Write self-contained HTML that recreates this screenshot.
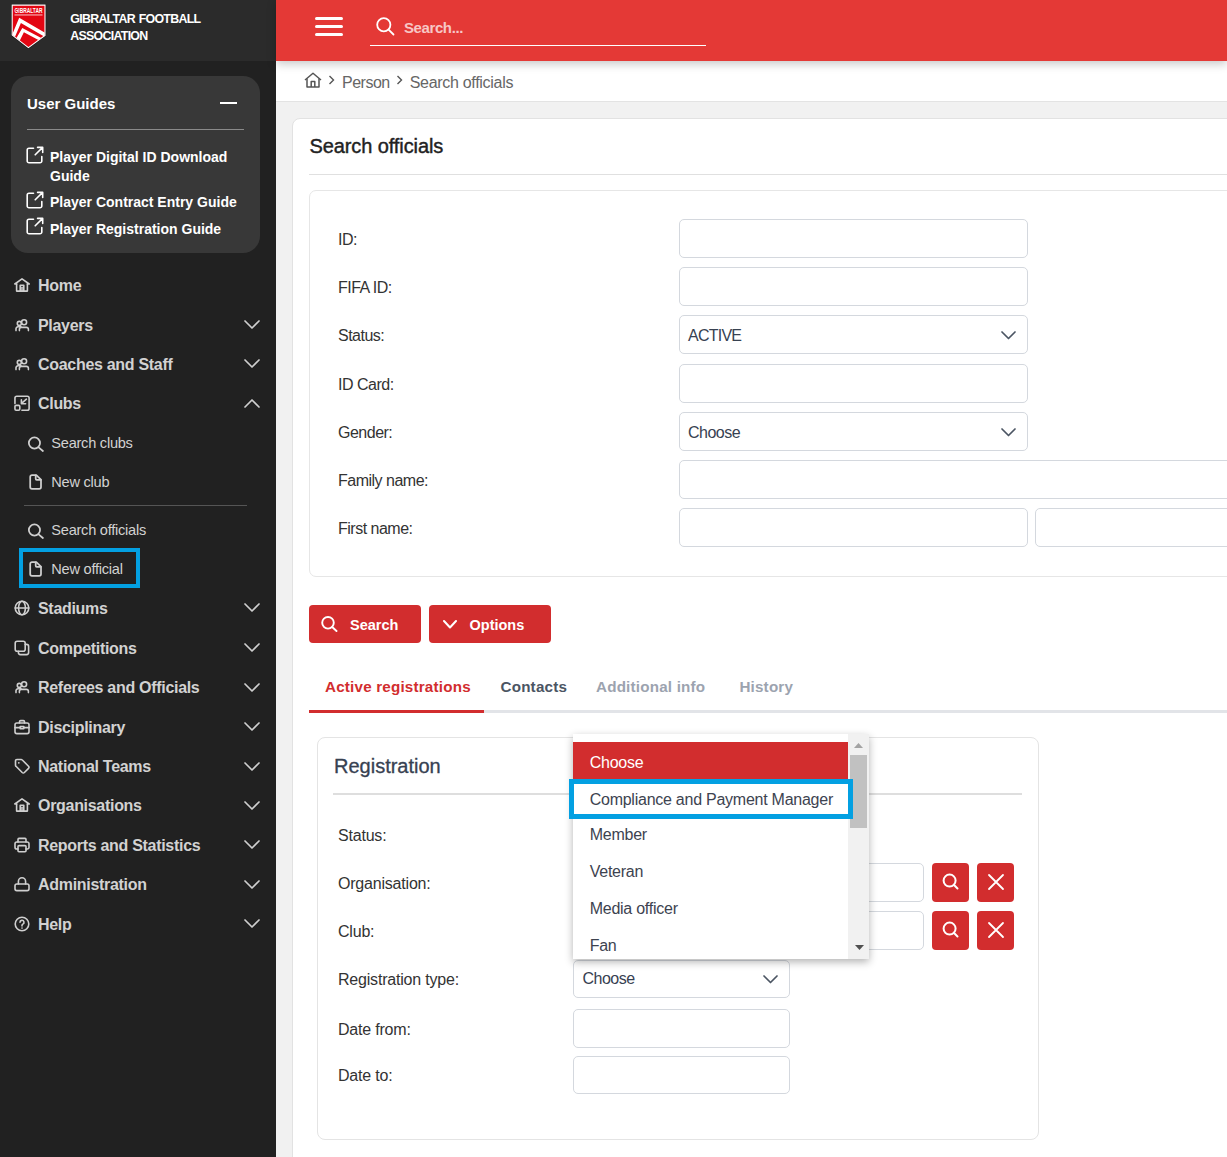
<!DOCTYPE html>
<html><head><meta charset="utf-8">
<style>
*{box-sizing:border-box;margin:0;padding:0}
html,body{width:1227px;height:1157px;overflow:hidden;background:#f1f1f1;font-family:"Liberation Sans",sans-serif}
.abs{position:absolute}
svg{display:block}
#sb{position:absolute;left:0;top:0;width:276px;height:1157px;background:#212121}
#sbtop{position:absolute;left:0;top:0;width:276px;height:61px;background:#2b2b2b}
.brand{position:absolute;left:70.3px;top:11.2px;color:#fff;font-weight:700;font-size:12.4px;line-height:17px;letter-spacing:-0.72px;word-spacing:1px}
#ug{position:absolute;left:11px;top:76px;width:249px;height:177px;background:#383838;border-radius:17px}
.ugt{position:absolute;left:16px;top:18px;color:#fff;font-weight:700;font-size:15px;line-height:20px}
.ugline{position:absolute;left:16px;top:53px;width:217px;height:1px;background:#8a8a8a}
.ugl{position:absolute;left:39px;color:#fff;font-weight:700;font-size:14px;line-height:19px}
.ugi{position:absolute;left:14.5px}
.nav{position:absolute;left:0;width:276px;height:24px;color:#d2d2d2;font-weight:700;font-size:16px;line-height:24px;letter-spacing:-0.3px}
.nav .t{position:absolute;left:38px;top:0;white-space:nowrap}
.nav svg.i{position:absolute;left:14px;top:4px}
.nav svg.c{position:absolute;left:244px;top:8px}
.sub{position:absolute;left:0;width:276px;height:24px;color:#d2d2d2;font-weight:400;font-size:14.6px;line-height:24px;letter-spacing:-0.25px}
.sub .t{position:absolute;left:51.3px;top:0;white-space:nowrap}
.sub svg.i{position:absolute;left:27px;top:4px}
#hdr{position:absolute;left:276px;top:0;width:951px;height:61px;background:#e43936;box-shadow:0 3px 9px rgba(0,0,0,0.22);z-index:2}
#bc{position:absolute;left:276px;top:61px;width:951px;height:41px;background:#fff;border-bottom:1px solid #e3e3e3}
.bct{position:absolute;top:11.5px;color:#666;font-size:16px;line-height:20px;letter-spacing:-0.5px}
#card{position:absolute;left:292px;top:118px;width:960px;height:1100px;background:#fff;border:1px solid #e2e2e2;border-radius:8px}
.lbl{position:absolute;color:#333;font-size:16px;line-height:20px;letter-spacing:-0.5px;white-space:nowrap}
.inp{position:absolute;background:#fff;border:1.5px solid #d4d8de;border-radius:5px}
.seltxt{position:absolute;left:8px;top:9px;color:#444;font-size:15px;line-height:20px}
.btn{position:absolute;background:#d22d2e;border-radius:4px;color:#fff;font-weight:700;font-size:14.5px}
.tab{position:absolute;top:677px;font-weight:700;font-size:15.2px;line-height:20px;letter-spacing:0.2px;white-space:nowrap}
.dd{position:absolute;left:573px;top:734px;width:296px;height:225px;background:#fff;box-shadow:0 3px 8px rgba(0,0,0,0.3);overflow:hidden;z-index:5}
.ddi{position:absolute;left:16.7px;color:#3d4350;font-size:16px;line-height:20px;letter-spacing:-0.25px;white-space:nowrap}
</style></head><body>
<!-- SIDEBAR -->
<div id="sb">
  <div id="sbtop">
    <svg class="abs" style="left:0;top:0" width="60" height="56" viewBox="0 0 60 56">
      <defs><clipPath id="shc"><path d="M12.5 5.5H44.7V35.3L28.4 47.2L12.5 35Z"/></clipPath></defs>
      <path d="M11.9 4.8H45.3V35.7L28.4 48.1L11.9 35.3Z" fill="none" stroke="#111" stroke-width="1.6" opacity="0.7"/>
      <path d="M12.2 5.1H45V35.5L28.4 47.6L12.2 35.1Z" fill="#e30613" stroke="#fff" stroke-width="1.1"/>
      <g clip-path="url(#shc)">
        <path d="M11 37.5L19.2 17.8L47 33.8L47 38.2L20.9 22.9L14.3 38.6Z" fill="#fff"/>
        <path d="M13.5 43L22.3 27.9L47 41L47 44.6L23.9 32.2L17.6 45Z" fill="#fff"/>
      </g>
      <path d="M14.6 7.2H42.6V12.8H14.6Z" fill="none"/>
      <text x="28.5" y="12.9" font-size="7.4" font-family="Liberation Sans" font-weight="700" fill="#fff" text-anchor="middle" textLength="28" lengthAdjust="spacingAndGlyphs">GIBRALTAR</text>
      <rect x="14.5" y="14.3" width="28" height="1.3" fill="#fff" opacity="0.6"/>
    </svg>
    <div class="brand">GIBRALTAR FOOTBALL<br>ASSOCIATION</div>
  </div>
  <div id="ug">
    <div class="ugt">User Guides</div>
    <div class="abs" style="left:209px;top:26px;width:17px;height:2px;background:#fff"></div>
    <div class="ugline"></div>
    <svg class="ugi" style="top:69.5px" width="18" height="18" viewBox="0 0 18 18" fill="none" stroke="#fff" stroke-width="1.6" stroke-linecap="round" stroke-linejoin="round"><path d="M7.5 2.2H3A1.8 1.8 0 0 0 1.2 4V15A1.8 1.8 0 0 0 3 16.8H14A1.8 1.8 0 0 0 15.8 15V10.5"/><path d="M9.2 8.8L16.4 1.6M11.6 1.4H16.7V6.5"/></svg>
    <div class="ugl" style="top:72px">Player Digital ID Download<br>Guide</div>
    <svg class="ugi" style="top:114.5px" width="18" height="18" viewBox="0 0 18 18" fill="none" stroke="#fff" stroke-width="1.6" stroke-linecap="round" stroke-linejoin="round"><path d="M7.5 2.2H3A1.8 1.8 0 0 0 1.2 4V15A1.8 1.8 0 0 0 3 16.8H14A1.8 1.8 0 0 0 15.8 15V10.5"/><path d="M9.2 8.8L16.4 1.6M11.6 1.4H16.7V6.5"/></svg>
    <div class="ugl" style="top:116.5px">Player Contract Entry Guide</div>
    <svg class="ugi" style="top:141.2px" width="18" height="18" viewBox="0 0 18 18" fill="none" stroke="#fff" stroke-width="1.6" stroke-linecap="round" stroke-linejoin="round"><path d="M7.5 2.2H3A1.8 1.8 0 0 0 1.2 4V15A1.8 1.8 0 0 0 3 16.8H14A1.8 1.8 0 0 0 15.8 15V10.5"/><path d="M9.2 8.8L16.4 1.6M11.6 1.4H16.7V6.5"/></svg>
    <div class="ugl" style="top:143.5px">Player Registration Guide</div>
  </div>
  <div class="nav" style="top:273.7px"><span class="t">Home</span></div>
<div class="abs" style="left:14px;top:276.7px"><svg width="16" height="16" viewBox="0 0 16 16" fill="none" stroke="#cfcfcf" stroke-width="1.6" stroke-linecap="round" stroke-linejoin="round"><path d="M2.6 7H0.8L8 1.9L15.2 7H13.4"/><path d="M2.6 7V14.1H13.4V7"/><path d="M6.2 14.1V8.3H9.8V14.1"/><path d="M8 10.2V14"/></svg></div>
<div class="nav" style="top:313.5px"><span class="t">Players</span></div>
<div class="abs" style="left:14px;top:316.5px"><svg width="16" height="16" viewBox="0 0 16 16" fill="none" stroke="#cfcfcf" stroke-width="1.6" stroke-linecap="round" stroke-linejoin="round"><circle cx="5.3" cy="6.4" r="2"/><circle cx="10.1" cy="5.3" r="2.5" fill="#212121"/><path d="M2 13.6V12A2 2 0 0 1 4 9.8H7"/><path d="M5.4 13.6V12.3A2 2 0 0 1 7.4 10.4H12.4A2 2 0 0 1 14.4 12.3V13.6" fill="#212121"/></svg></div>
<div class="abs" style="left:244px;top:320.0px"><svg width="16" height="9" viewBox="0 0 16 9" fill="none" stroke="#cfcfcf" stroke-width="1.7" stroke-linecap="round" stroke-linejoin="round"><path d="M1 1L8 8L15 1"/></svg></div>
<div class="nav" style="top:352.7px"><span class="t">Coaches and Staff</span></div>
<div class="abs" style="left:14px;top:355.7px"><svg width="16" height="16" viewBox="0 0 16 16" fill="none" stroke="#cfcfcf" stroke-width="1.6" stroke-linecap="round" stroke-linejoin="round"><circle cx="5.3" cy="6.4" r="2"/><circle cx="10.1" cy="5.3" r="2.5" fill="#212121"/><path d="M2 13.6V12A2 2 0 0 1 4 9.8H7"/><path d="M5.4 13.6V12.3A2 2 0 0 1 7.4 10.4H12.4A2 2 0 0 1 14.4 12.3V13.6" fill="#212121"/></svg></div>
<div class="abs" style="left:244px;top:359.2px"><svg width="16" height="9" viewBox="0 0 16 9" fill="none" stroke="#cfcfcf" stroke-width="1.7" stroke-linecap="round" stroke-linejoin="round"><path d="M1 1L8 8L15 1"/></svg></div>
<div class="nav" style="top:392.3px"><span class="t">Clubs</span></div>
<div class="abs" style="left:14px;top:395.3px"><svg width="16" height="16" viewBox="0 0 16 16" fill="none" stroke="#cfcfcf" stroke-width="1.6" stroke-linecap="round" stroke-linejoin="round"><path d="M0.95 8.6V3A1.8 1.8 0 0 1 2.75 1.2H13.3A1.8 1.8 0 0 1 15.1 3V13.4A1.8 1.8 0 0 1 13.3 15.2H7.9"/><rect x="0.95" y="10.4" width="4.85" height="4.8" rx="1.2"/><path d="M12.4 4.2L7.8 8.2"/><path d="M7.4 4.8V8.7H11.6"/></svg></div>
<div class="abs" style="left:244px;top:398.8px"><svg width="16" height="9" viewBox="0 0 16 9" fill="none" stroke="#cfcfcf" stroke-width="1.7" stroke-linecap="round" stroke-linejoin="round"><path d="M1 8L8 1L15 8"/></svg></div>
<div class="nav" style="top:596.9px"><span class="t">Stadiums</span></div>
<div class="abs" style="left:14px;top:599.9px"><svg width="16" height="16" viewBox="0 0 16 16" fill="none" stroke="#cfcfcf" stroke-width="1.6" stroke-linecap="round" stroke-linejoin="round"><circle cx="8" cy="8" r="6.8"/><path d="M1.2 8H14.8"/><path d="M8 1.2A3.4 6.8 0 0 0 8 14.8A3.4 6.8 0 0 0 8 1.2Z"/></svg></div>
<div class="abs" style="left:244px;top:603.4px"><svg width="16" height="9" viewBox="0 0 16 9" fill="none" stroke="#cfcfcf" stroke-width="1.7" stroke-linecap="round" stroke-linejoin="round"><path d="M1 1L8 8L15 1"/></svg></div>
<div class="nav" style="top:636.9px"><span class="t">Competitions</span></div>
<div class="abs" style="left:14px;top:639.9px"><svg width="16" height="16" viewBox="0 0 16 16" fill="none" stroke="#cfcfcf" stroke-width="1.6" stroke-linecap="round" stroke-linejoin="round"><rect x="1.2" y="1.2" width="10" height="10" rx="2"/><path d="M11.2 4.4H12.6A2 2 0 0 1 14.6 6.4V12.6A2 2 0 0 1 12.6 14.6H6.4A2 2 0 0 1 4.4 12.6V11.2"/></svg></div>
<div class="abs" style="left:244px;top:643.4px"><svg width="16" height="9" viewBox="0 0 16 9" fill="none" stroke="#cfcfcf" stroke-width="1.7" stroke-linecap="round" stroke-linejoin="round"><path d="M1 1L8 8L15 1"/></svg></div>
<div class="nav" style="top:676.3px"><span class="t">Referees and Officials</span></div>
<div class="abs" style="left:14px;top:679.3px"><svg width="16" height="16" viewBox="0 0 16 16" fill="none" stroke="#cfcfcf" stroke-width="1.6" stroke-linecap="round" stroke-linejoin="round"><circle cx="5.3" cy="6.4" r="2"/><circle cx="10.1" cy="5.3" r="2.5" fill="#212121"/><path d="M2 13.6V12A2 2 0 0 1 4 9.8H7"/><path d="M5.4 13.6V12.3A2 2 0 0 1 7.4 10.4H12.4A2 2 0 0 1 14.4 12.3V13.6" fill="#212121"/></svg></div>
<div class="abs" style="left:244px;top:682.8px"><svg width="16" height="9" viewBox="0 0 16 9" fill="none" stroke="#cfcfcf" stroke-width="1.7" stroke-linecap="round" stroke-linejoin="round"><path d="M1 1L8 8L15 1"/></svg></div>
<div class="nav" style="top:715.5px"><span class="t">Disciplinary</span></div>
<div class="abs" style="left:14px;top:718.5px"><svg width="16" height="16" viewBox="0 0 16 16" fill="none" stroke="#cfcfcf" stroke-width="1.6" stroke-linecap="round" stroke-linejoin="round"><path d="M5.5 4V2.8A1.2 1.2 0 0 1 6.7 1.6H9.3A1.2 1.2 0 0 1 10.5 2.8V4"/><rect x="1" y="4" width="14" height="10.6" rx="1.8"/><path d="M1 8.6H15"/><rect x="6.2" y="7.6" width="3.6" height="2.2" fill="#212121"/></svg></div>
<div class="abs" style="left:244px;top:722.0px"><svg width="16" height="9" viewBox="0 0 16 9" fill="none" stroke="#cfcfcf" stroke-width="1.7" stroke-linecap="round" stroke-linejoin="round"><path d="M1 1L8 8L15 1"/></svg></div>
<div class="nav" style="top:755.0px"><span class="t">National Teams</span></div>
<div class="abs" style="left:14px;top:758.0px"><svg width="16" height="16" viewBox="0 0 16 16" fill="none" stroke="#cfcfcf" stroke-width="1.6" stroke-linecap="round" stroke-linejoin="round"><circle cx="4.8" cy="4.8" r="0.9" fill="#cfcfcf" stroke="none"/><path d="M1.5 2.9V7.1A1.6 1.6 0 0 0 2 8.3L8.2 14.5A1.6 1.6 0 0 0 10.4 14.5L14.5 10.4A1.6 1.6 0 0 0 14.5 8.2L8.3 2A1.6 1.6 0 0 0 7.1 1.5H2.9A1.4 1.4 0 0 0 1.5 2.9Z"/></svg></div>
<div class="abs" style="left:244px;top:761.5px"><svg width="16" height="9" viewBox="0 0 16 9" fill="none" stroke="#cfcfcf" stroke-width="1.7" stroke-linecap="round" stroke-linejoin="round"><path d="M1 1L8 8L15 1"/></svg></div>
<div class="nav" style="top:794.2px"><span class="t">Organisations</span></div>
<div class="abs" style="left:14px;top:797.2px"><svg width="16" height="16" viewBox="0 0 16 16" fill="none" stroke="#cfcfcf" stroke-width="1.6" stroke-linecap="round" stroke-linejoin="round"><path d="M2.6 7H0.8L8 1.9L15.2 7H13.4"/><path d="M2.6 7V14.1H13.4V7"/><path d="M6.2 14.1V8.3H9.8V14.1"/><path d="M8 10.2V14"/></svg></div>
<div class="abs" style="left:244px;top:800.7px"><svg width="16" height="9" viewBox="0 0 16 9" fill="none" stroke="#cfcfcf" stroke-width="1.7" stroke-linecap="round" stroke-linejoin="round"><path d="M1 1L8 8L15 1"/></svg></div>
<div class="nav" style="top:833.8px"><span class="t">Reports and Statistics</span></div>
<div class="abs" style="left:14px;top:836.8px"><svg width="16" height="16" viewBox="0 0 16 16" fill="none" stroke="#cfcfcf" stroke-width="1.6" stroke-linecap="round" stroke-linejoin="round"><path d="M4 5V2.4A1 1 0 0 1 5 1.4H11A1 1 0 0 1 12 2.4V5"/><path d="M4 12H2.8A1.8 1.8 0 0 1 1 10.2V6.8A1.8 1.8 0 0 1 2.8 5H13.2A1.8 1.8 0 0 1 15 6.8V10.2A1.8 1.8 0 0 1 13.2 12H12"/><rect x="4" y="8.6" width="8" height="6.2" rx="1"/></svg></div>
<div class="abs" style="left:244px;top:840.3px"><svg width="16" height="9" viewBox="0 0 16 9" fill="none" stroke="#cfcfcf" stroke-width="1.7" stroke-linecap="round" stroke-linejoin="round"><path d="M1 1L8 8L15 1"/></svg></div>
<div class="nav" style="top:873.1px"><span class="t">Administration</span></div>
<div class="abs" style="left:14px;top:876.1px"><svg width="16" height="16" viewBox="0 0 16 16" fill="none" stroke="#cfcfcf" stroke-width="1.6" stroke-linecap="round" stroke-linejoin="round"><rect x="1" y="8" width="14" height="6.6" rx="1.8"/><path d="M4.4 8V5.4A3.6 3.6 0 0 1 11.6 5.4V8"/></svg></div>
<div class="abs" style="left:244px;top:879.6px"><svg width="16" height="9" viewBox="0 0 16 9" fill="none" stroke="#cfcfcf" stroke-width="1.7" stroke-linecap="round" stroke-linejoin="round"><path d="M1 1L8 8L15 1"/></svg></div>
<div class="nav" style="top:912.6px"><span class="t">Help</span></div>
<div class="abs" style="left:14px;top:915.6px"><svg width="16" height="16" viewBox="0 0 16 16" fill="none" stroke="#cfcfcf" stroke-width="1.6" stroke-linecap="round" stroke-linejoin="round"><circle cx="8" cy="8" r="6.8"/><path d="M6 6.3A2 2 0 1 1 8.9 8.1C8.3 8.4 8 8.8 8 9.4V9.9"/><path d="M8 12V12.1"/></svg></div>
<div class="abs" style="left:244px;top:919.1px"><svg width="16" height="9" viewBox="0 0 16 9" fill="none" stroke="#cfcfcf" stroke-width="1.7" stroke-linecap="round" stroke-linejoin="round"><path d="M1 1L8 8L15 1"/></svg></div>
<div class="sub" style="top:430.8px"><span class="t">Search clubs</span></div>
<div class="abs" style="left:26px;top:435.6px"><svg width="18" height="17" viewBox="0 0 18 17" fill="none" stroke="#cfcfcf" stroke-width="1.75" stroke-linecap="round" stroke-linejoin="round"><circle cx="8.45" cy="7" r="5.6"/><path d="M12.6 11.3L16.9 15"/></svg></div>
<div class="sub" style="top:469.9px"><span class="t">New club</span></div>
<div class="abs" style="left:28px;top:473.7px"><svg width="18" height="17" viewBox="0 0 18 17" fill="none" stroke="#cfcfcf" stroke-width="1.75" stroke-linecap="round" stroke-linejoin="round"><path d="M8.3 1.1H4A1.8 1.8 0 0 0 2.2 2.9V13.1A1.8 1.8 0 0 0 4 14.9H11.2A1.8 1.8 0 0 0 13 13.1V5.7L8.3 1.1Z"/><path d="M7.7 1.4V4.8A1 1 0 0 0 8.7 5.8H12.8"/></svg></div>
<div class="sub" style="top:518.0px"><span class="t">Search officials</span></div>
<div class="abs" style="left:26px;top:522.8px"><svg width="18" height="17" viewBox="0 0 18 17" fill="none" stroke="#cfcfcf" stroke-width="1.75" stroke-linecap="round" stroke-linejoin="round"><circle cx="8.45" cy="7" r="5.6"/><path d="M12.6 11.3L16.9 15"/></svg></div>
<div class="sub" style="top:556.7px"><span class="t">New official</span></div>
<div class="abs" style="left:28px;top:560.5px"><svg width="18" height="17" viewBox="0 0 18 17" fill="none" stroke="#cfcfcf" stroke-width="1.75" stroke-linecap="round" stroke-linejoin="round"><path d="M8.3 1.1H4A1.8 1.8 0 0 0 2.2 2.9V13.1A1.8 1.8 0 0 0 4 14.9H11.2A1.8 1.8 0 0 0 13 13.1V5.7L8.3 1.1Z"/><path d="M7.7 1.4V4.8A1 1 0 0 0 8.7 5.8H12.8"/></svg></div>
<div class="abs" style="left:24px;top:505px;width:223px;height:1px;background:#555"></div>
<div class="abs" style="left:19px;top:548px;width:121px;height:40px;border:4.5px solid #03a0e2"></div>
</div>
<!-- HEADER -->
<div id="hdr">
  <div class="abs" style="left:39px;top:17px;width:28px;height:3px;background:#fff;border-radius:2px"></div>
  <div class="abs" style="left:39px;top:25px;width:28px;height:3px;background:#fff;border-radius:2px"></div>
  <div class="abs" style="left:39px;top:33px;width:28px;height:3px;background:#fff;border-radius:2px"></div>
  <svg class="abs" style="left:100px;top:17px" width="19" height="19" viewBox="0 0 19 19" fill="none" stroke="#fff" stroke-width="1.8" stroke-linecap="round"><circle cx="7.8" cy="7.8" r="6.6"/><path d="M12.6 12.6L17.5 17.5"/></svg>
  <div class="abs" style="left:128px;top:18px;color:rgba(255,255,255,0.72);font-weight:700;font-size:15px;line-height:20px;letter-spacing:-0.4px">Search...</div>
  <div class="abs" style="left:94px;top:45px;width:336px;height:1px;background:#fff"></div>
</div>
<!-- BREADCRUMB -->
<div id="bc">
  <svg class="abs" style="left:28px;top:11px" width="18" height="16" viewBox="0 0 18 16" fill="none" stroke="#555" stroke-width="1.5" stroke-linejoin="round"><path d="M1 8L9 1.2L17 8"/><path d="M3 6.5V15H15V6.5"/><path d="M7.2 15V9.5H10.8V15"/></svg>
  <svg class="abs" style="left:52px;top:14px" width="7" height="10" viewBox="0 0 7 10" fill="none" stroke="#555" stroke-width="1.4"><path d="M1.5 1L5.5 5L1.5 9"/></svg>
  <div class="bct" style="left:66px">Person</div>
  <svg class="abs" style="left:120px;top:14px" width="7" height="10" viewBox="0 0 7 10" fill="none" stroke="#555" stroke-width="1.4"><path d="M1.5 1L5.5 5L1.5 9"/></svg>
  <div class="bct" style="left:133.7px;letter-spacing:-0.3px">Search officials</div>
</div>
<!-- CARD -->
<div id="card"></div>
<div class="abs" style="left:309.5px;top:134px;color:#222;font-weight:400;font-size:20px;line-height:24px;letter-spacing:-0.1px;-webkit-text-stroke:0.4px #222">Search officials</div>
<div class="abs" style="left:309px;top:174px;width:918px;height:1px;background:#e0e0e0"></div>
<div class="abs" style="left:309px;top:190px;width:960px;height:387px;border:1px solid #e6e6e6;border-radius:7px"></div>
<div class="lbl" style="left:338px;top:230.05px">ID:</div>
<div class="inp" style="left:679px;top:219px;width:349px;height:38.5px"></div>
<div class="lbl" style="left:338px;top:278.05px">FIFA ID:</div>
<div class="inp" style="left:679px;top:267px;width:349px;height:38.5px"></div>
<div class="lbl" style="left:338px;top:326.05px">Status:</div>
<div class="inp" style="left:679px;top:315px;width:349px;height:38.5px"></div>
<div class="abs" style="left:688px;top:326.05px;color:#374151;font-size:16px;line-height:20px;letter-spacing:-0.75px">ACTIVE</div>
<svg class="abs" style="left:1001px;top:330.85px" width="15" height="9" viewBox="0 0 15 9" fill="none" stroke="#4b5563" stroke-width="1.7" stroke-linecap="round" stroke-linejoin="round"><path d="M1 1L7.5 7.5L14 1"/></svg>
<div class="lbl" style="left:338px;top:375.05px">ID Card:</div>
<div class="inp" style="left:679px;top:364px;width:349px;height:38.5px"></div>
<div class="lbl" style="left:338px;top:423.05px">Gender:</div>
<div class="inp" style="left:679px;top:412px;width:349px;height:38.5px"></div>
<div class="abs" style="left:688px;top:423.05px;color:#374151;font-size:16px;line-height:20px;letter-spacing:-0.5px">Choose</div>
<svg class="abs" style="left:1001px;top:427.85px" width="15" height="9" viewBox="0 0 15 9" fill="none" stroke="#4b5563" stroke-width="1.7" stroke-linecap="round" stroke-linejoin="round"><path d="M1 1L7.5 7.5L14 1"/></svg>
<div class="lbl" style="left:338px;top:471.05px">Family name:</div>
<div class="inp" style="left:679px;top:460px;width:600px;height:38.5px"></div>
<div class="lbl" style="left:338px;top:519.05px">First name:</div>
<div class="inp" style="left:679px;top:508px;width:349px;height:38.5px"></div>
<div class="inp" style="left:1035px;top:508px;width:300px;height:38.5px"></div>
<div class="btn" style="left:309px;top:605px;width:112px;height:38px">
  <svg class="abs" style="left:12px;top:11px" width="17" height="16" viewBox="0 0 17 16" fill="none" stroke="#fff" stroke-width="1.9" stroke-linecap="round"><circle cx="7" cy="6.8" r="5.8"/><path d="M11.2 11L15.5 15"/></svg>
  <div class="abs" style="left:41px;top:9.5px;line-height:20px">Search</div>
</div>
<div class="btn" style="left:429px;top:605px;width:122px;height:38px">
  <svg class="abs" style="left:14px;top:15px" width="14" height="9" viewBox="0 0 14 9" fill="none" stroke="#fff" stroke-width="2" stroke-linecap="round" stroke-linejoin="round"><path d="M1 1L7 7.5L13 1"/></svg>
  <div class="abs" style="left:40.5px;top:9.5px;line-height:20px">Options</div>
</div>
<div class="tab" style="left:325px;color:#d22d2e">Active registrations</div>
<div class="tab" style="left:500.5px;color:#4b5563">Contacts</div>
<div class="tab" style="left:596px;color:#9ca3af">Additional info</div>
<div class="tab" style="left:739.4px;color:#9ca3af">History</div>
<div class="abs" style="left:309px;top:710px;width:918px;height:3px;background:#e2e4e8"></div>
<div class="abs" style="left:309px;top:710px;width:175px;height:3px;background:#d22d2e"></div>
<div class="abs" style="left:317px;top:737px;width:722px;height:403px;border:1px solid #e4e4e4;border-radius:8px;background:#fff"></div>
<div class="abs" style="left:334px;top:754px;color:#374151;font-size:20px;line-height:24px;-webkit-text-stroke:0.3px #374151">Registration</div>
<div class="abs" style="left:333px;top:793px;width:689px;height:2px;background:#dedede"></div>
<div class="lbl" style="left:338px;top:826.10px;letter-spacing:-0.2px">Status:</div>
<div class="lbl" style="left:338px;top:874.10px;letter-spacing:-0.2px">Organisation:</div>
<div class="lbl" style="left:338px;top:922.00px;letter-spacing:-0.2px">Club:</div>
<div class="lbl" style="left:338px;top:970.00px;letter-spacing:-0.2px">Registration type:</div>
<div class="lbl" style="left:338px;top:1019.80px;letter-spacing:-0.2px">Date from:</div>
<div class="lbl" style="left:338px;top:1065.90px;letter-spacing:-0.2px">Date to:</div>
<div class="inp" style="left:573px;top:863px;width:351px;height:38.5px"></div>
<div class="btn" style="left:932px;top:863px;width:37px;height:38.5px"><svg class="abs" style="left:10px;top:10px" width="18" height="18" viewBox="0 0 18 18" fill="none" stroke="#fff" stroke-width="2" stroke-linecap="round"><circle cx="7.6" cy="7.6" r="6"/><path d="M11.8 11.8L15.5 15.5"/></svg></div>
<div class="btn" style="left:977px;top:863px;width:37px;height:38.5px"><svg class="abs" style="left:10px;top:10px" width="18" height="18" viewBox="0 0 18 18" fill="none" stroke="#fff" stroke-width="1.8" stroke-linecap="round"><path d="M2 2L16 16M16 2L2 16"/></svg></div>
<div class="inp" style="left:573px;top:911.4px;width:351px;height:38.5px"></div>
<div class="btn" style="left:932px;top:911.4px;width:37px;height:38.5px"><svg class="abs" style="left:10px;top:10px" width="18" height="18" viewBox="0 0 18 18" fill="none" stroke="#fff" stroke-width="2" stroke-linecap="round"><circle cx="7.6" cy="7.6" r="6"/><path d="M11.8 11.8L15.5 15.5"/></svg></div>
<div class="btn" style="left:977px;top:911.4px;width:37px;height:38.5px"><svg class="abs" style="left:10px;top:10px" width="18" height="18" viewBox="0 0 18 18" fill="none" stroke="#fff" stroke-width="1.8" stroke-linecap="round"><path d="M2 2L16 16M16 2L2 16"/></svg></div>
<div class="inp" style="left:573px;top:959.6px;width:216.5px;height:38.5px"></div>
<div class="abs" style="left:582.5px;top:969px;color:#374151;font-size:16px;line-height:20px;letter-spacing:-0.5px">Choose</div>
<svg class="abs" style="left:763px;top:974.5px" width="15" height="9" viewBox="0 0 15 9" fill="none" stroke="#4b5563" stroke-width="1.7" stroke-linecap="round" stroke-linejoin="round"><path d="M1 1L7.5 7.5L14 1"/></svg>
<div class="inp" style="left:573px;top:1009px;width:216.5px;height:38.5px"></div>
<div class="inp" style="left:573px;top:1056px;width:216.5px;height:38px"></div>
<div class="dd">
  <div class="abs" style="left:0;top:8px;width:275px;height:37px;background:#d22d2e"></div>
  <div class="ddi" style="top:18.8px;color:#fff">Choose</div>
  <div class="ddi" style="top:56px">Compliance and Payment Manager</div>
  <div class="ddi" style="top:90.8px">Member</div>
  <div class="ddi" style="top:127.6px">Veteran</div>
  <div class="ddi" style="top:164.9px">Media officer</div>
  <div class="ddi" style="top:202.2px">Fan</div>
  <div class="abs" style="left:275px;top:0;width:21px;height:225px;background:#f1f1f1"></div>
  <div class="abs" style="left:277px;top:21px;width:17px;height:73px;background:#c1c1c1"></div>
  <svg class="abs" style="left:281px;top:9px" width="9" height="5" viewBox="0 0 9 5"><path d="M0 5L4.5 0L9 5Z" fill="#a3a3a3"/></svg>
  <svg class="abs" style="left:281.5px;top:211px" width="9" height="5" viewBox="0 0 9 5"><path d="M0 0L4.5 5L9 0Z" fill="#505050"/></svg>
</div>
<div class="abs" style="left:569px;top:779px;width:284px;height:40px;border:5px solid #03a0e2;z-index:6"></div>

</body></html>
